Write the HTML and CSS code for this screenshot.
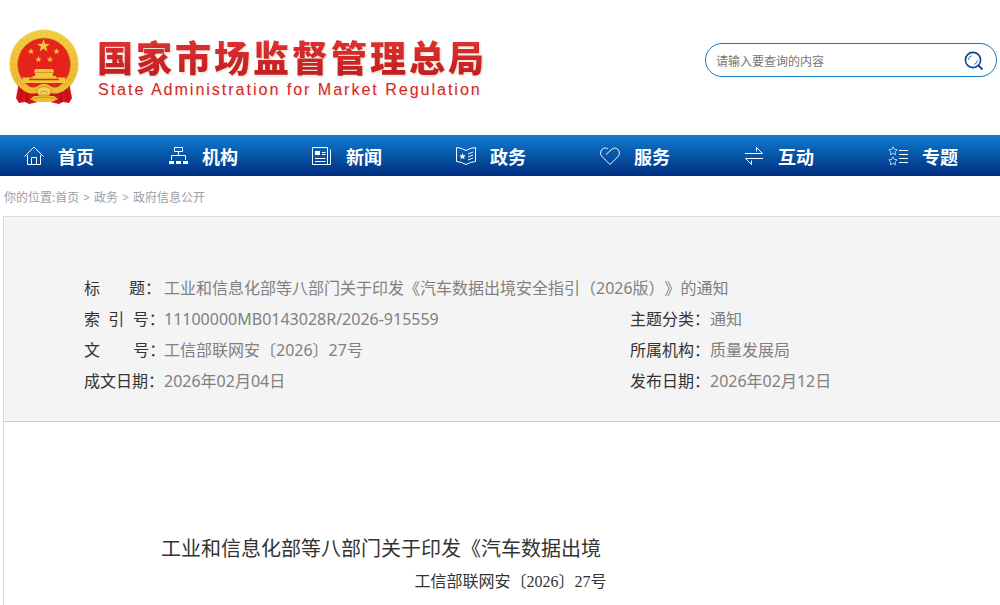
FILE: index.html
```
<!doctype html>
<html lang="zh-CN">
  <head>
    <meta charset="utf-8">
    <meta name="viewport" content="width=device-width, initial-scale=1">
    <title>国家市场监督管理总局</title>
    <link rel="stylesheet" href="styles.css">
  </head>
  <body>
    <header class="header">
      <a class="logo" href="#">
        <svg class="emblem" viewBox="0 0 70 76" aria-hidden="true">
          <defs>
            <linearGradient id="gold" x1="0" y1="0" x2="0" y2="1">
              <stop offset="0" stop-color="#f5cf45"/>
              <stop offset="1" stop-color="#eab530"/>
            </linearGradient>
            <path id="star" d="M0-5 1.2-1.6 4.8-1.5 1.9.6 2.9 4 0 2-2.9 4-1.9.6-4.8-1.5-1.2-1.6z"/>
          </defs>
          <circle cx="35" cy="35" r="34.5" fill="url(#gold)"/>
          <circle cx="35" cy="35" r="30.5" fill="none" stroke="#dda023" stroke-width="4" stroke-dasharray="2 3" opacity=".25"/>
          <circle cx="35" cy="35.5" r="26.5" fill="#e5231b" stroke="#c98a1c" stroke-width=".8"/>
          <g fill="#f2c63c">
            <use href="#star" transform="translate(34.5 17) scale(1.35)"/>
            <use href="#star" transform="translate(22 22.5) scale(.68)"/>
            <use href="#star" transform="translate(47.5 22.5) scale(.68)"/>
            <use href="#star" transform="translate(29.5 30.5) scale(.68)"/>
            <use href="#star" transform="translate(41 30.5) scale(.68)"/>
            <path d="M26 40h18l1 3-1 1v3h3v1.500h9.500v5.500h-43V48.500H23.500V47h2.500v-3L25 43z"/>
          </g>
          <path d="M26 43.500h18" stroke="#c98716" stroke-width=".7"/>
          <path d="M20 50.500h30" stroke="#e5231b" stroke-width="1.500"/>
          <path d="M10 53 7 69l3 5 6-1 4 2 9-2h12l9 2 4-2 6 1 3-5-3-16-10 7-15 2-15-2z" fill="#d3141a"/>
          <path d="M13 59l-2 13M18 63v10M52 63v10M57 59l2 13" stroke="#9e0d12" stroke-width="1"/>
          <path d="M9 51c6 8 14 9 20 6 4-3 8-3 12 0 6 3 14 2 20-6l1 4c-6 8-14 11-20 9l-2 3h5l4 3-6 3H27l-6-3 4-3h5l-2-3c-7 2-14-1-20-9z" fill="#edbd36"/>
          <path d="M27 61q8-7 16 0l-3 5H30z" fill="#f6d45b" stroke="#c98716" stroke-width=".8"/>
          <path d="M31 64q4-4 8 0M23 70q12-4 24 0" fill="none" stroke="#c98716" stroke-width=".8"/>
        </svg>
        <span class="logo-text">
          <strong class="logo-cn">国家市场监督管理总局</strong>
          <span class="logo-en">State Administration for Market Regulation</span>
        </span>
      </a>
      <form class="search">
        <input type="text" aria-label="搜索" placeholder="请输入要查询的内容">
        <button type="button" aria-label="搜索">
          <svg viewBox="0 0 20 20" fill="none" stroke="#0d4593">
            <circle cx="9" cy="9" r="7.6" stroke-width="1.6"/>
            <path d="M4.500 9a5 5 0 0 1 3.500-4.500M13.500 9.500a5 5 0 0 1-3.500 4" stroke-width=".8"/>
            <path d="M14.500 14.500l4 4" stroke-width="1.800"/>
          </svg>
        </button>
      </form>
    </header>

    <nav class="nav">
      <a href="#">
        <svg viewBox="0 0 20 20"><path d="M.5 10.500 10 1l9.500 9.500M3.500 9v9.500h13V9M7.500 18.500v-7h5v7"/></svg>
        <span>首页</span>
      </a>
      <a href="#">
        <svg viewBox="0 0 20 20"><path d="M6.500 1.500h8v4h-8zM10.500 5.500v4M3.500 14V9.500h14V14"/><path class="solid" d="M1 15h5v3H1zM8 15h5v3H8zM15 15h5v3h-5z"/></svg>
        <span>机构</span>
      </a>
      <a href="#">
        <svg viewBox="0 0 20 20"><path d="M.5 1.500h15v17H.5zM15.500 18.500h3v-15M10 6.500h3.500M10 8.500h3.500M3 12.500h10.500M3 15.500h10.500"/><path class="solid" d="M3 5h5v4H3z"/></svg>
        <span>新闻</span>
      </a>
      <a href="#">
        <svg viewBox="0 0 20 20"><path d="M.5 1.500Q6 2 10 4.500 14 2 19.500 1.500v14Q14 16 10 18.500 6 16 .5 15.500zM12 8l5-2M12 11l5-2M12 14l5-2"/><path class="solid" d="M6.500 7 7.400 9.200 9.700 9.400 8 10.900 8.500 13.200 6.500 12 4.500 13.200 5 10.900 3.300 9.400 5.600 9.200z"/></svg>
        <span>政务</span>
      </a>
      <a href="#">
        <svg viewBox="0 0 20 20"><path d="M6 8.500 11 4c3-3 6-2 7.500 0 1.500 2.500 1 5-.5 6.500l-8 8-8-8C.5 9 0 6.500 1.500 4 3.500 1.500 6 1.500 8 3"/></svg>
        <span>服务</span>
      </a>
      <a href="#">
        <svg viewBox="0 0 20 20"><path d="M1 7.500h17.500L12.500 1.500v4M19 12.500H1.500l6 6v-4"/></svg>
        <span>互动</span>
      </a>
      <a href="#">
        <svg viewBox="0 0 20 20"><path d="M11 4.500h9M11 8.500h9M11 12.500h9M11 16.500h9"/><path class="thin" d="M5 .8 6.300 3.400 9.200 3.800 7.100 5.900 7.600 8.800 5 7.400 2.400 8.800 2.900 5.900.8 3.800 3.700 3.400zM5 10.800 6.300 13.400 9.200 13.800 7.100 15.900 7.600 18.800 5 17.400 2.400 18.800 2.900 15.900.8 13.800 3.700 13.400z"/></svg>
        <span>专题</span>
      </a>
    </nav>

    <div class="breadcrumb">
      <span>你的位置:<a href="#">首页</a></span>
      <span>&gt;</span>
      <a href="#">政务</a>
      <span>&gt;</span>
      <a href="#">政府信息公开</a>
    </div>

    <main class="content">
      <dl class="info">
        <div class="wide">
          <dt>标&nbsp;&nbsp;&nbsp;&nbsp;&nbsp;&nbsp;&nbsp;题：</dt>
          <dd>工业和信息化部等八部门关于印发《汽车数据出境安全指引（2026版）》的通知</dd>
        </div>
        <div>
          <dt>索&nbsp;&nbsp;引&nbsp;&nbsp;号：</dt>
          <dd>11100000MB0143028R/2026-915559</dd>
        </div>
        <div>
          <dt>主题分类：</dt>
          <dd>通知</dd>
        </div>
        <div>
          <dt>文&nbsp;&nbsp;&nbsp;&nbsp;&nbsp;&nbsp;&nbsp;&nbsp;号：</dt>
          <dd>工信部联网安〔2026〕27号</dd>
        </div>
        <div>
          <dt>所属机构：</dt>
          <dd>质量发展局</dd>
        </div>
        <div>
          <dt>成文日期：</dt>
          <dd>2026年02月04日</dd>
        </div>
        <div>
          <dt>发布日期：</dt>
          <dd>2026年02月12日</dd>
        </div>
      </dl>
      <article class="article">
        <h1>工业和信息化部等八部门关于印发《汽车数据出境</h1>
        <p>工信部联网安〔2026〕27号</p>
      </article>
    </main>
  </body>
</html>
```
FILE: styles.css
```
* {
  box-sizing: border-box;
}

body {
  display: flex;
  flex-direction: column;
  min-height: 100vh;
  margin: 0;
  background: #fff;
  color: #333;
  font-family: "Noto Sans", "Noto Sans CJK SC", sans-serif;
  font-size: 16px;
  text-spacing-trim: space-all;
}

a {
  color: inherit;
  text-decoration: none;
}

/* header */
.header {
  display: flex;
  justify-content: space-between;
  height: 135px;
  padding: 0 3px 0 9px;
}
.logo {
  display: flex;
  gap: 18px;
  padding-top: 29px;
}
.emblem {
  width: 70px;
  height: 76px;
}
.logo-text {
  display: flex;
  flex-direction: column;
  padding-top: 6px;
  color: #d0282a;
}
.logo-cn {
  font-family: "Noto Sans CJK SC", sans-serif;
  font-size: 36px;
  font-weight: 900;
  line-height: 42px;
  letter-spacing: 3px;
  background: linear-gradient(#e23434, #c01c20);
  background-clip: text;
  -webkit-background-clip: text;
  color: transparent;
  filter: drop-shadow(1px 1px 1px #e5d3bd);
}
.logo-en {
  padding-left: 1px;
  font-family: "Liberation Sans", sans-serif;
  font-size: 16px;
  line-height: 26px;
  letter-spacing: 2px;
  text-shadow: 1px 1px 1px #f0e4d6;
}

.search {
  display: flex;
  align-items: center;
  width: 292px;
  height: 34px;
  margin-top: 43px;
  padding: 2px 12px 0 10px;
  border: 1px solid #1778c5;
  border-radius: 17px;
}
.search input {
  flex: 1;
  min-width: 0;
  padding: 0;
  border: 0;
  outline: 0;
  background: none;
  font: 12px "Noto Sans", "Noto Sans CJK SC", sans-serif;
}
.search input::placeholder {
  color: #757575;
}
.search button {
  width: 20px;
  height: 20px;
  padding: 0;
  border: 0;
  background: none;
  cursor: pointer;
}
.search svg {
  display: block;
}

/* main menu */
.nav {
  display: flex;
  justify-content: space-between;
  height: 41px;
  padding: 0 42px 0 24px;
  background: linear-gradient(#0f7dd0, #002d7f);
}
.nav a {
  display: flex;
  align-items: center;
  gap: 14px;
  color: #fff;
  font-size: 18px;
  font-weight: bold;
  line-height: 38px;
}
.nav span {
  padding-top: 3px;
}
.nav svg {
  width: 20px;
  height: 20px;
  fill: none;
  stroke: #fff;
}
.nav .solid {
  fill: #fff;
  stroke: none;
}
.nav .thin {
  stroke-width: .7;
}

.breadcrumb {
  display: flex;
  gap: 4px;
  padding: 4px 0 0 4px;
  color: #9a9ea8;
  font-size: 12px;
  line-height: 36px;
}

/* document */
.content {
  flex: 1;
  margin-left: 3px;
  border-top: 1px solid #d3dbe5;
  border-left: 1px solid #d3dbe5;
}
.info {
  display: grid;
  grid-template-columns: 546px 1fr;
  margin: 0;
  padding: 56px 0 24px 80px;
  border-bottom: 1px solid #ccc;
  background: #f4f4f4;
  line-height: 31px;
}
.info div {
  display: flex;
}
.info .wide {
  grid-column: 1 / -1;
}
.info dt {
  width: 80px;
  white-space: nowrap;
}
.info dd {
  margin: 0;
  color: #808080;
}

.article {
  padding: 110px 140px 0 157px;
}
.article h1 {
  margin: 0;
  font-size: 20px;
  font-weight: normal;
  line-height: 34px;
}
.article p {
  margin: 0;
  font-family: "Liberation Serif", "Noto Sans CJK SC", serif;
  line-height: 32px;
  text-align: center;
}
```
